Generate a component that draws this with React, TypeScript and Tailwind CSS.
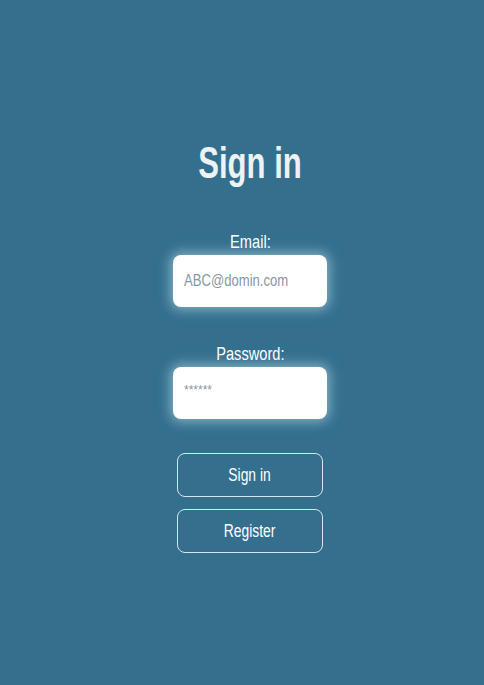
import React from 'react';

// No narrow font installed: squeeze Liberation Sans horizontally to approximate Arial Narrow
const Narrow: React.FC<{ children: React.ReactNode; className?: string }> = ({ children, className = '' }) => (
  <span className={`inline-block ${className}`}>{children}</span>
);

const App: React.FC = () => {
  return (
    <div
      className="min-h-[685px] w-full bg-[#34708e] flex flex-col items-center pl-4 pt-[136px]"
      style={{ fontFamily: '"Liberation Sans", Arial, sans-serif' }}
    >
      {/* Title */}
      <h1 className="text-[45px] leading-[54px] font-bold text-[#eef2f5] mb-[41px]">
        <Narrow className="scale-x-[0.69]">Sign in</Narrow>
      </h1>

      {/* Email */}
      <label className="text-[19px] leading-[22px] text-white mb-[2px]">
        <Narrow className="scale-x-[0.77]">Email:</Narrow>
      </label>
      <div className="w-[154px] h-[52px] bg-white rounded-[8px] shadow-[0_0_12px_3px_rgba(190,225,240,0.55)] flex items-center px-[11px]">
        <Narrow className="scale-x-[0.77] origin-left text-[17px] text-[#8797a4] whitespace-nowrap">ABC@domin.com</Narrow>
      </div>

      {/* Password */}
      <label className="text-[19px] leading-[22px] text-white mt-[36px] mb-[2px]">
        <Narrow className="scale-x-[0.77]">Password:</Narrow>
      </label>
      <div className="w-[154px] h-[52px] bg-white rounded-[8px] shadow-[0_0_12px_3px_rgba(190,225,240,0.55)] flex items-start pt-[14px] px-[11px]">
        <span className="text-[12px] text-[#8797a4]">******</span>
      </div>

      {/* Buttons */}
      <button className="mt-[34px] w-[146px] h-[44px] rounded-[8px] border border-[#d8e6ee] text-[18px] text-white">
        <Narrow className="scale-x-[0.77]">Sign in</Narrow>
      </button>
      <button className="mt-[12px] w-[146px] h-[44px] rounded-[8px] border border-[#d8e6ee] text-[18px] text-white">
        <Narrow className="scale-x-[0.77]">Register</Narrow>
      </button>
    </div>
  );
};

export default App;
